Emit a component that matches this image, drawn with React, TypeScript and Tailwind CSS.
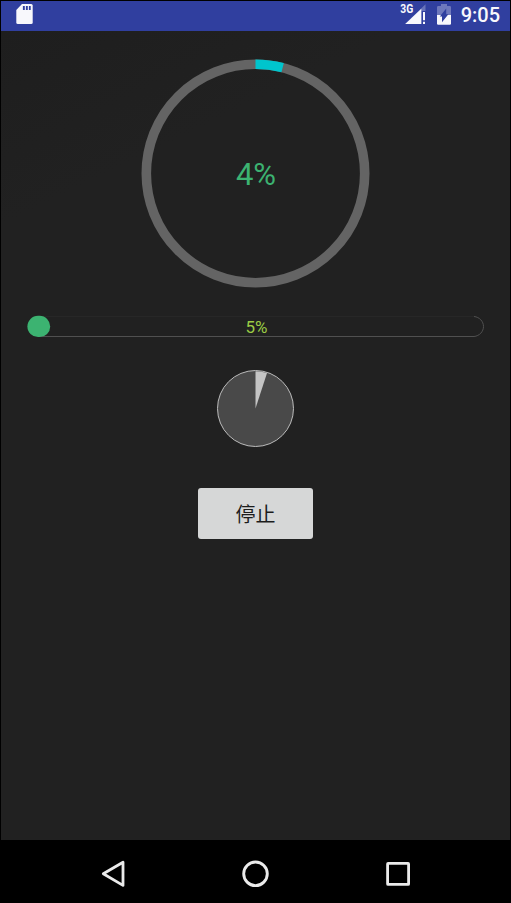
function SdCardIcon() {
  return (
    <svg width="17" height="20" viewBox="0 0 17 20" shapeRendering="geometricPrecision">
      <path d="M6 0H15.2Q16.7 0 16.7 1.5V18.5Q16.7 20 15.2 20H1.8Q.3 20 .3 18.5V6Z" fill="#f8f8fc" />
      <path d="M6.9 2h1.9v4H6.9zM9.9 2h1.9v4H9.9zM12.9 2h1.8v4h-1.8z" fill="#303f9f" />
    </svg>
  );
}

function SignalIcon() {
  return (
    <svg className="overflow-visible" width="27" height="21" viewBox="0 0 27 21">
      <path d="M25.5 .3V7H21.3V20H5.2Z" fill="#6772b9" />
      <path d="M21.3 4.8V20H5.2Z" fill="#f8f8fc" />
      <path d="M23 8h2v8.3h-2zM23 17.8h2V20h-2z" fill="#f8f8fc" />
      <text x="0.2" y="9.2" fill="#f8f8fc" fontSize="12" fontWeight="700" fontFamily="Roboto, sans-serif" textLength="13" lengthAdjust="spacingAndGlyphs">
        3G
      </text>
    </svg>
  );
}

function BatteryIcon() {
  return (
    <svg width="14" height="21" viewBox="0 0 14 21">
      <path d="M4 0H10V2H12.8Q14 2 14 3.2V11H0V3.2Q0 2 1.2 2H4Z" fill="#6e78bc" />
      <path d="M0 11H14V19.5Q14 20.7 12.8 20.7H1.2Q0 20.7 0 19.5Z" fill="#f8f8fc" />
      <path d="M9.2 4.6V10.2H11.4L5 18.2V12.6H2.8Z" fill="#303f9f" />
    </svg>
  );
}

function StatusBar() {
  return (
    <header className="flex h-[30px] shrink-0 items-start justify-between bg-[#303f9f] pr-[10px] pl-[15px] pt-[3px]">
      <SdCardIcon />
      <div className="flex items-start">
        <SignalIcon />
        <div className="ml-[10px]">
          <BatteryIcon />
        </div>
        <span className="ml-[9px] w-10 text-right text-[20px] leading-[23px] font-medium whitespace-nowrap text-[#f8f8fc]">9:05</span>
      </div>
    </header>
  );
}

function RingProgress() {
  return (
    <svg className="block" width="229" height="229" viewBox="0 0 229 229">
      <circle cx="114.5" cy="114.5" r="109.2" fill="none" stroke="#646464" strokeWidth="9.6" />
      <circle
        cx="114.5"
        cy="114.5"
        r="109.2"
        fill="none"
        stroke="#00c5cd"
        strokeWidth="9.6"
        pathLength="100"
        strokeDasharray="4 96"
        transform="rotate(-90 114.5 114.5)"
      />
      <text x="115" y="126" textAnchor="middle" fontSize="31" fontFamily="Roboto, sans-serif" fill="#3cb371">
        4%
      </text>
    </svg>
  );
}

function BarProgress() {
  return (
    <svg className="block" width="459" height="23" viewBox="0 0 459 23">
      <path d="M12 1.5H448" stroke="#272727" fill="none" />
      <path d="M12 21.5H448" stroke="#505050" fill="none" />
      <path d="M448 1.5C453.5 2 457.5 6.5 457.5 11.5S453.5 21 448 21.5" stroke="#505050" fill="none" />
      <rect x="1.4" y="0.8" width="22.8" height="21.2" rx="10.6" fill="#3cb371" />
      <text x="230.5" y="18" textAnchor="middle" fontSize="17" fontFamily="Roboto, sans-serif" fill="#9bcb45">
        5%
      </text>
    </svg>
  );
}

function PieProgress() {
  return (
    <svg className="block" width="79" height="79" viewBox="0 0 79 79">
      <circle cx="39.5" cy="39.5" r="38" fill="#494949" stroke="#bcbcbc" strokeWidth="1" />
      <path d="M39.5 39.5V2.2A37.3 37.3 0 0 1 51.03 4.03Z" fill="#c4c4c4" />
    </svg>
  );
}

function NavigationBar() {
  return (
    <nav className="flex h-[62px] shrink-0 items-start bg-black pt-[20px] pl-[100px]">
      <svg width="25" height="29" viewBox="0 0 25 29">
        <path d="M22 2.2V25.4L2.3 13.8Z" fill="none" stroke="#ebebeb" strokeWidth="2.8" strokeLinejoin="round" />
      </svg>
      <svg className="ml-[115px]" width="29" height="29" viewBox="0 0 29 29">
        <circle cx="14.5" cy="13.8" r="11.8" fill="none" stroke="#ebebeb" strokeWidth="2.9" />
      </svg>
      <svg className="ml-[114px]" width="29" height="29" viewBox="0 0 29 29">
        <rect x="3.6" y="3.4" width="21" height="21" rx="0.5" fill="none" stroke="#ebebeb" strokeWidth="2.8" strokeLinejoin="round" />
      </svg>
    </nav>
  );
}

export default function App() {
  return (
    <div className="flex h-[903px] w-[511px] flex-col overflow-hidden border border-black bg-[#212121] font-['Roboto','Noto_Sans_CJK_SC',sans-serif]">
      <StatusBar />
      <main className="flex min-h-0 flex-1 flex-col items-center bg-[linear-gradient(154deg,#1e1e1e_0px,#212121_175px)] pt-7">
        <RingProgress />
        <div className="mt-[27px]">
          <BarProgress />
        </div>
        <div className="mt-[31px]">
          <PieProgress />
        </div>
        <button className="mt-[40px] flex h-[51px] w-[115px] items-center justify-center rounded-[3px] bg-[#d6d7d7] pt-[2px] text-[20px] text-[#1c1c1c]">
          停止
        </button>
      </main>
      <NavigationBar />
    </div>
  );
}
